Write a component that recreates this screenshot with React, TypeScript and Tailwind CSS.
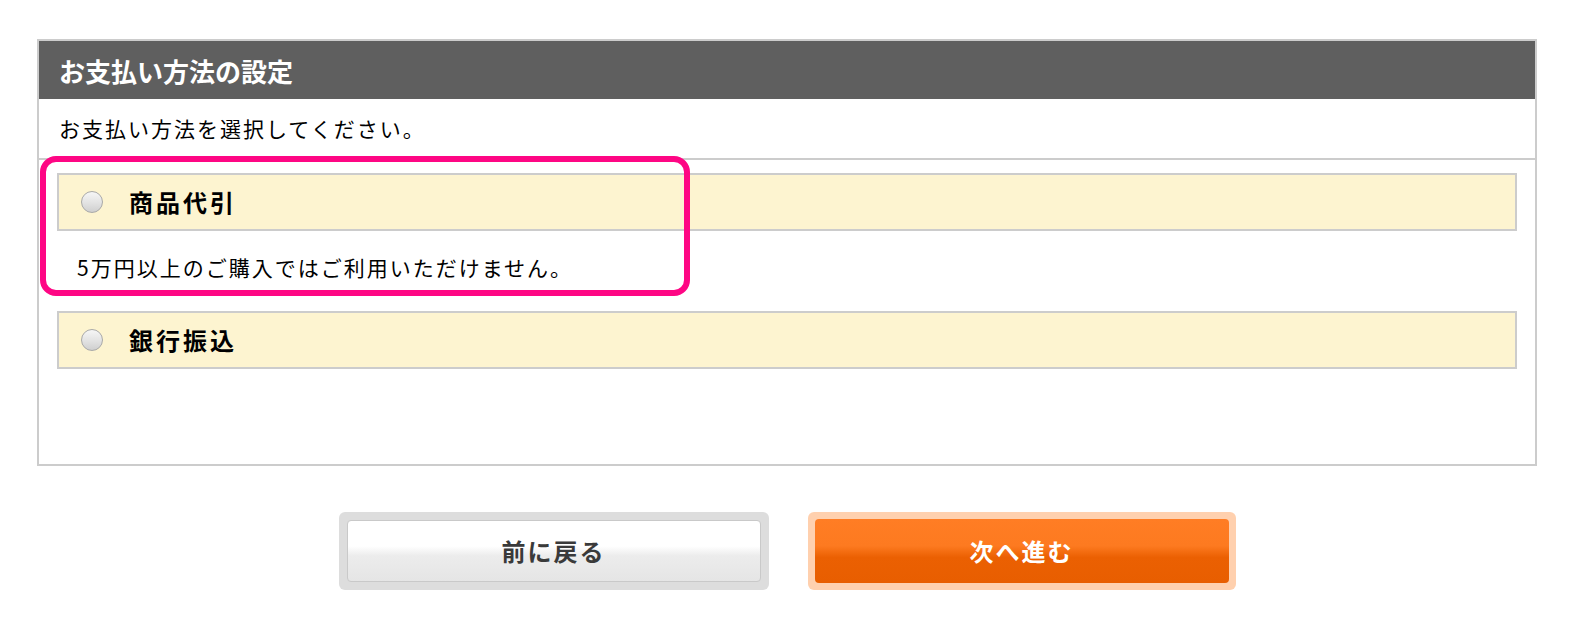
import React from 'react'

const methods = [
  { id: 'cod', label: '商品代引', note: '5万円以上のご購入ではご利用いただけません。' },
  { id: 'bank', label: '銀行振込', note: '' },
]

const Radio: React.FC = () => (
  <span className="block w-[22px] h-[22px] shrink-0 rounded-full border border-[#a9a9a9] bg-[linear-gradient(to_bottom,#f6f6f6_0%,#e2e2e2_55%,#cfcfcf_100%)]" />
)

const App: React.FC = () => {
  return (
    <div className="min-h-[625px] bg-white font-['Noto_Sans_CJK_JP','Noto_Sans',sans-serif] text-black">
      <div className="pt-[39px] pl-[37px]">
        {/* お支払い方法パネル */}
        <div className="relative w-[1500px] border-2 border-[#cccccc] bg-white">
          <div className="flex h-[58px] items-center bg-[#5f5f5f] pl-[20px] text-[26px] font-bold text-white">
            お支払い方法の設定
          </div>
          <div className="flex h-[61px] items-center border-b-2 border-[#cccccc] pl-[20px] text-[21px] tracking-[2px]">
            お支払い方法を選択してください。
          </div>

          <div className="pt-[13px] pb-[95px]">
            {methods.map((m) => (
              <div key={m.id}>
                <div className="mx-[18px] flex h-[58px] items-center border-2 border-[#cccccc] bg-[#fdf4d0] pl-[22px]">
                  <Radio />
                  <span className="ml-[26px] text-[24px] font-bold tracking-[3px]">{m.label}</span>
                </div>
                {m.note && (
                  <div className="flex h-[80px] items-center pb-[6px] pl-[38px] text-[21px] tracking-[2px]">
                    {m.note}
                  </div>
                )}
              </div>
            ))}
          </div>

          {/* 注目枠 */}
          <div className="pointer-events-none absolute left-[1px] top-[115px] h-[140px] w-[650px] rounded-[16px] border-[6px] border-[#fe0684]" />
        </div>

        {/* ボタン */}
        <div className="mt-[46px] flex w-[1500px] justify-center gap-[39px]">
          <div className="h-[78px] w-[430px] rounded-[6px] bg-[#dddddd] p-[8px]">
            <button className="flex h-full w-full items-center justify-center rounded-[4px] border border-[#c9c9c9] bg-[linear-gradient(to_bottom,#ffffff_0%,#ffffff_42%,#ececec_58%,#e5e5e5_100%)] text-[24px] font-bold tracking-[2px] text-[#3a3a3a]">
              前に戻る
            </button>
          </div>
          <div className="h-[78px] w-[428px] rounded-[6px] bg-[#ffd0ae] p-[7px]">
            <button className="flex h-full w-full items-center justify-center rounded-[4px] bg-[linear-gradient(to_bottom,#ff7d24_0%,#fd7a20_42%,#eb6002_60%,#e85e00_100%)] text-[24px] font-bold tracking-[2px] text-white">
              次へ進む
            </button>
          </div>
        </div>
      </div>
    </div>
  )
}

export default App
